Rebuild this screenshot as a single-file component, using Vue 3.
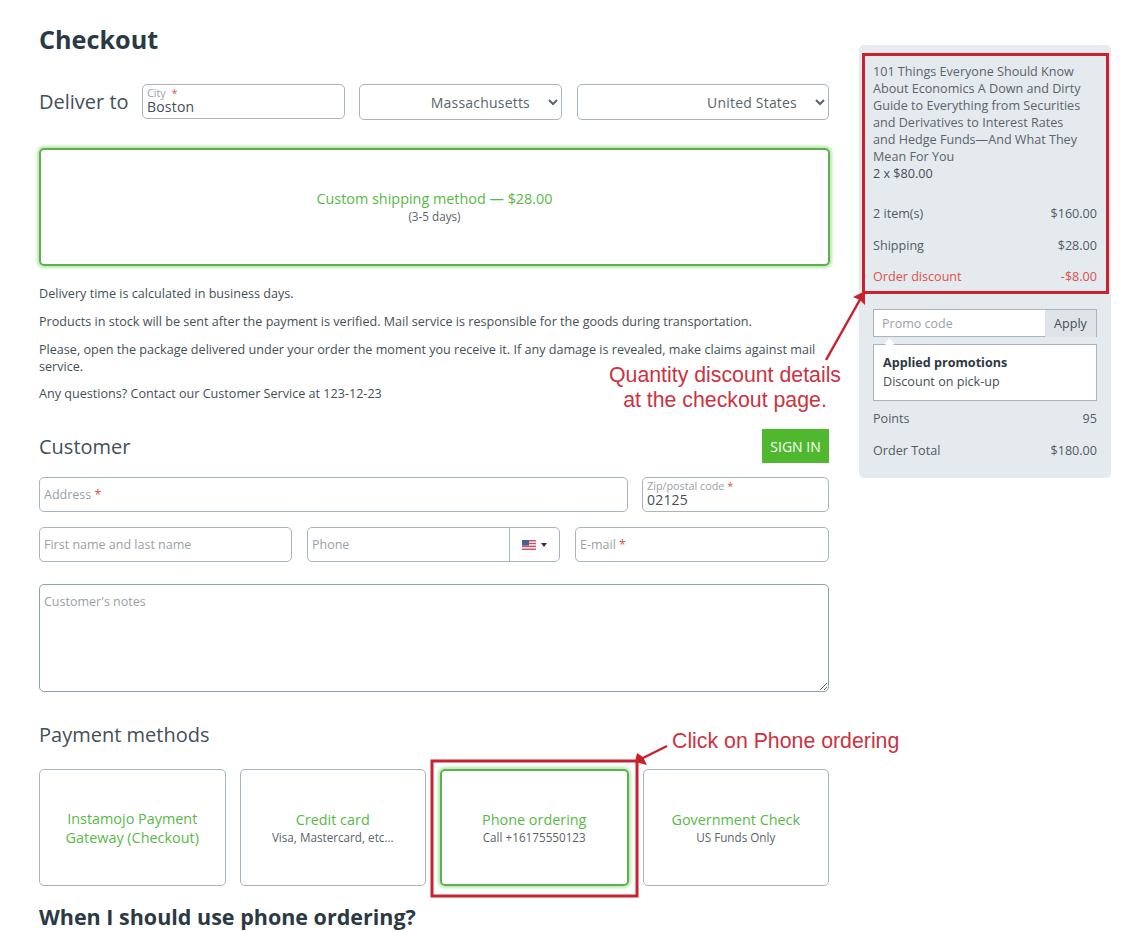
<script setup>
const items = [
  { label: '2 item(s)', value: '$160.00' },
  { label: 'Shipping', value: '$28.00' },
  { label: 'Order discount', value: '-$8.00', red: true },
]
const payments = [
  { title: 'Instamojo Payment Gateway (Checkout)' },
  { title: 'Credit card', sub: 'Visa, Mastercard, etc...' },
  { title: 'Phone ordering', sub: 'Call +16175550123', active: true },
  { title: 'Government Check', sub: 'US Funds Only' },
]
</script>

<template>
  <div class="page">
    <main class="main">
      <h1>Checkout</h1>

      <div class="deliver">
        <span class="deliver-label">Deliver to</span>
        <div class="field float city">
          <span class="mini">City <i class="star">&nbsp;*</i></span>
          <span class="val">Boston</span>
        </div>
        <select class="sel state"><option>Massachusetts</option></select>
        <select class="sel country"><option>United States</option></select>
      </div>

      <div class="ship">
        <div class="green">Custom shipping method — $28.00</div>
        <div class="sub">(3-5 days)</div>
      </div>

      <div class="notes">
        <p>Delivery time is calculated in business days.</p>
        <p>Products in stock will be sent after the payment is verified. Mail service is responsible for the goods during transportation.</p>
        <p class="tight">Please, open the package delivered under your order the moment you receive it. If any damage is revealed, make claims against mail service.</p>
        <p>Any questions? Contact our Customer Service at 123-12-23</p>
      </div>

      <div class="cust-head">
        <h2>Customer</h2>
        <button class="signin">SIGN IN</button>
      </div>

      <div class="row addr">
        <div class="field ph address">Address<i class="star">&nbsp;*</i></div>
        <div class="field float zip">
          <span class="mini">Zip/postal code <i class="star">*</i></span>
          <span class="val">02125</span>
        </div>
      </div>

      <div class="row contact">
        <div class="field ph name">First name and last name</div>
        <div class="field ph phone">
          <span class="phone-text">Phone</span>
          <span class="flag-btn">
            <svg width="14" height="10" viewBox="0 0 14 10">
              <rect width="14" height="10" fill="#f4f0f2" />
              <rect y="0" width="14" height="1.4" fill="#d0525f" />
              <rect y="2.8" width="14" height="1.4" fill="#d0525f" />
              <rect y="5.7" width="14" height="1.4" fill="#d0525f" />
              <rect y="8.6" width="14" height="1.4" fill="#d0525f" />
              <rect width="7" height="5.6" fill="#4a5a9e" />
            </svg>
            <span class="caret"></span>
          </span>
        </div>
        <div class="field ph email">E-mail<i class="star">&nbsp;*</i></div>
      </div>

      <div class="textarea-wrap">
        <textarea class="ta" placeholder="Customer's notes"></textarea>
      </div>

      <h2 class="pay-title">Payment methods</h2>
      <div class="pay">
        <div v-for="p in payments" :key="p.title" class="pay-card" :class="{ active: p.active }">
          <div class="green">{{ p.title }}</div>
          <div v-if="p.sub" class="sub">{{ p.sub }}</div>
        </div>
      </div>

      <h3>When I should use phone ordering?</h3>
    </main>

    <aside class="side">
      <div class="book">101 Things Everyone Should Know About Economics A Down and Dirty Guide to Everything from Securities and Derivatives to Interest Rates and Hedge Funds—And What They Mean For You</div>
      <div class="qty">2 x $80.00</div>

      <div class="lines">
        <div v-for="l in items" :key="l.label" class="line" :class="{ red: l.red }">
          <span>{{ l.label }}</span><span>{{ l.value }}</span>
        </div>
      </div>

      <div class="promo">
        <input class="promo-input" placeholder="Promo code" />
        <span class="apply">Apply</span>
      </div>
      <div class="applied">
        <b>Applied promotions</b>
        <span>Discount on pick-up</span>
      </div>

      <div class="line after"><span>Points</span><span>95</span></div>
      <div class="line after"><span>Order Total</span><span>$180.00</span></div>
    </aside>

    <svg class="overlay" width="1146" height="932" viewBox="0 0 1146 932">
      <rect x="863.5" y="54.5" width="244" height="238" fill="none" stroke="#c9222f" stroke-width="3" />
      <rect x="432" y="761" width="205" height="135" fill="none" stroke="#c9222f" stroke-width="3" />
      <path d="M826 360 L862 296" stroke="#c9222f" stroke-width="2.5" fill="none" />
      <path d="M865 291 L853 297 L860 300 L865 305 Z" fill="#c9222f" />
      <path d="M667 746 L641 759" stroke="#c9222f" stroke-width="2.5" fill="none" />
      <path d="M635 762 L637 753 L643 757 L647 765 Z" fill="#c9222f" />
    </svg>
    <div class="ann ann1">Quantity discount details<br />at the checkout page.</div>
    <div class="ann ann2">Click on Phone ordering</div>
  </div>
</template>

<style>
html, body { margin: 0; background: #fff; }
</style>

<style scoped>
.page {
  position: relative;
  width: 1146px;
  height: 932px;
  overflow: hidden;
  box-sizing: border-box;
  padding: 0 35px 0 39px;
  display: flex;
  gap: 29px;
  align-items: flex-start;
  font-family: "Open Sans", "Noto Sans", sans-serif;
  color: #454f57;
  font-size: 12.6px;
}
.main { width: 791px; flex: none; }
h1 { margin: 22px 0 0; font-size: 25.2px; line-height: 34px; font-weight: 700; color: #2b3944; }
h2 { margin: 0; font-size: 20px; line-height: 26px; font-weight: 400; color: #454f57; }
h3 { margin: 17px 0 0; font-size: 21.5px; line-height: 27px; font-weight: 700; color: #2b3944; }
.star { color: #d9534f; font-style: normal; }

.deliver { display: flex; align-items: flex-start; margin-top: 28px; height: 36px; width: 790px; }
.deliver-label { font-size: 20px; width: 103px; flex: none; color: #454f57; line-height: 36px; }
.field {
  box-sizing: border-box;
  border: 1px solid #a9b5bd;
  border-radius: 5px;
  background: #fff;
  height: 35px;
}
.float { display: flex; flex-direction: column; padding: 1px 4px 0; }
.mini { font-size: 10.8px; line-height: 13px; color: #9aa1a6; }
.val { font-size: 14px; line-height: 16px; color: #454f57; letter-spacing: .2px; }
.ph { display: flex; align-items: center; padding-left: 4px; font-size: 12.5px; color: #9aa1a6; }
.city { width: 203px; flex: none; }
.sel {
  box-sizing: border-box;
  height: 36px;
  border: 1px solid #a9b5bd;
  border-radius: 5px;
  background: #fff;
  font-family: inherit;
  font-size: 14px;
  color: #5a646c;
  text-align: right;
  text-align-last: right;
  padding: 0 15px 0 0;
  letter-spacing: .2px;
}
.state { width: 203px; margin-left: 14px; }
.country { width: 252px; margin-left: 15px; }

.ship {
  box-sizing: border-box;
  height: 118px;
  margin-top: 28px;
  width: 791px;
  border: 2px solid #5cb04f;
  border-radius: 5px;
  box-shadow: 0 0 3px 2px #b9e8ad;
  display: flex;
  flex-direction: column;
  align-items: center;
  justify-content: center;
}
.green { color: #58b947; font-size: 14.4px; line-height: 19px; text-align: center; }
.sub { color: #5b646b; font-size: 11.7px; line-height: 17px; text-align: center; }

.notes { margin-top: 19px; width: 790px; }
.notes p { margin: 0 0 11px; line-height: 17px; }
.notes p.tight { margin-bottom: 10px; }

.cust-head { display: flex; justify-content: space-between; align-items: center; margin-top: 27px; height: 34px; width: 790px; }
.cust-head h2 { padding-top: 2px; }
.signin {
  width: 67px;
  height: 34px;
  border: 0;
  background: #4fb82f;
  color: #fff;
  font-family: inherit;
  font-size: 14px;
  padding: 0;
}
.row { display: flex; width: 790px; }
.addr { margin-top: 14px; gap: 14px; }
.address { width: 589px; }
.zip { width: 187px; }
.contact { margin-top: 15px; }
.name { width: 253px; }
.phone { width: 253px; margin-left: 15px; justify-content: space-between; padding-right: 0; }
.phone-text { line-height: 33px; }
.flag-btn { width: 50px; height: 33px; border-left: 1px solid #a9b5bd; display: flex; align-items: center; justify-content: center; gap: 5px; box-sizing: border-box; }
.caret { width: 0; height: 0; border-left: 3.5px solid transparent; border-right: 3.5px solid transparent; border-top: 4px solid #333; }
.email { width: 254px; margin-left: 15px; }

.textarea-wrap { margin-top: 22px; height: 108px; }
.ta {
  display: block;
  box-sizing: border-box;
  width: 790px;
  height: 108px;
  border: 1px solid #8ea0a8;
  border-radius: 5px;
  padding: 8px 4px;
  font-family: inherit;
  font-size: 12.5px;
  line-height: 17px;
  outline: none;
}
.ta::placeholder { color: #9aa1a6; opacity: 1; }

.pay-title { margin-top: 30px; }
.pay { display: flex; margin-top: 21px; gap: 14px; width: 790px; }
.pay-card {
  box-sizing: border-box;
  flex: 1 1 0;
  height: 117px;
  border: 1px solid #a9b5bd;
  border-radius: 5px;
  display: flex;
  flex-direction: column;
  align-items: center;
  justify-content: center;
  padding: 0 16px;
}
.pay-card.active { border: 2px solid #5cb04f; box-shadow: 0 0 3px 2px #b9e8ad; }

.side {
  box-sizing: border-box;
  width: 252px;
  flex: none;
  height: 433px;
  margin-top: 45px;
  padding: 18px 14px 0;
  background: #e5eaee;
  border-radius: 5px;
}
.book { line-height: 17px; color: #5a646c; width: 211px; }
.qty { line-height: 17px; color: #454f57; }
.lines { margin-top: 23px; display: flex; flex-direction: column; gap: 14.5px; }
.line { display: flex; justify-content: space-between; line-height: 17px; color: #525c64; }
.line.red { color: #d9534f; }
.promo { margin-top: 24px; display: flex; height: 28px; box-sizing: border-box; }
.promo-input {
  box-sizing: border-box;
  width: 172px;
  height: 28px;
  border: 1px solid #a9b5bd;
  border-right: 0;
  background: #fff;
  padding: 0 8px;
  font-family: inherit;
  font-size: 12.5px;
  outline: none;
  border-radius: 0;
}
.promo-input::placeholder { color: #9aa1a6; opacity: 1; }
.apply {
  box-sizing: border-box;
  flex: 1;
  border: 1px solid #a9b5bd;
  border-bottom: 0;
  border-left: 0;
  background: #dfe4e9;
  text-align: center;
  line-height: 27px;
  color: #454f57;
}
.applied {
  position: relative;
  box-sizing: border-box;
  margin-top: 7px;
  height: 57px;
  background: #fff;
  border: 1px solid #a9b5bd;
  padding: 8px 9px 0;
  display: flex;
  flex-direction: column;
  line-height: 19px;
  color: #454f57;
}
.applied b { font-weight: 700; color: #2b3944; }
.applied::before {
  content: "";
  position: absolute;
  left: 12px;
  top: -5px;
  width: 7px;
  height: 7px;
  background: #fff;
  transform: rotate(45deg);
}
.line.after { margin-top: 14.5px; }
.applied + .line.after { margin-top: 9px; }

.overlay { position: absolute; left: 0; top: 0; pointer-events: none; }
.ann { position: absolute; font-family: "Liberation Sans", Arial, sans-serif; font-size: 21.3px; color: #cc3340; line-height: 25px; }
.ann1 { left: 600px; top: 363px; width: 250px; text-align: center; }
.ann2 { left: 672px; top: 729px; white-space: nowrap; }
</style>
